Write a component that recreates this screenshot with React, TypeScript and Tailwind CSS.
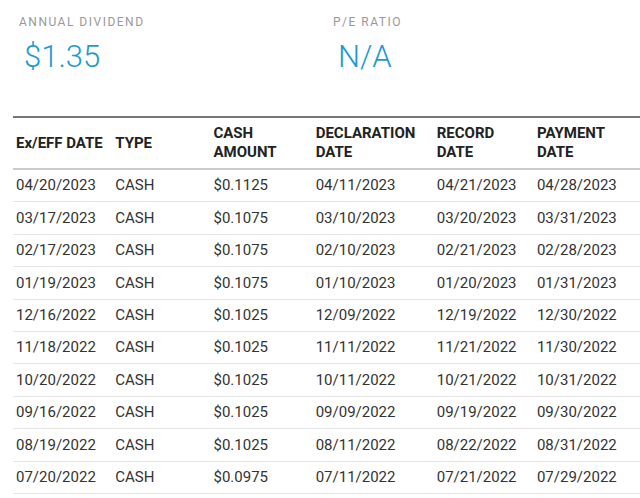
const rows = [
  ["04/20/2023", "CASH", "$0.1125", "04/11/2023", "04/21/2023", "04/28/2023"],
  ["03/17/2023", "CASH", "$0.1075", "03/10/2023", "03/20/2023", "03/31/2023"],
  ["02/17/2023", "CASH", "$0.1075", "02/10/2023", "02/21/2023", "02/28/2023"],
  ["01/19/2023", "CASH", "$0.1075", "01/10/2023", "01/20/2023", "01/31/2023"],
  ["12/16/2022", "CASH", "$0.1025", "12/09/2022", "12/19/2022", "12/30/2022"],
  ["11/18/2022", "CASH", "$0.1025", "11/11/2022", "11/21/2022", "11/30/2022"],
  ["10/20/2022", "CASH", "$0.1025", "10/11/2022", "10/21/2022", "10/31/2022"],
  ["09/16/2022", "CASH", "$0.1025", "09/09/2022", "09/19/2022", "09/30/2022"],
  ["08/19/2022", "CASH", "$0.1025", "08/11/2022", "08/22/2022", "08/31/2022"],
  ["07/20/2022", "CASH", "$0.0975", "07/11/2022", "07/21/2022", "07/29/2022"],
];

const headers = ["Ex/EFF DATE", "TYPE", "CASH AMOUNT", "DECLARATION DATE", "RECORD DATE", "PAYMENT DATE"];
const widths = ["w-[100px]", "w-[99px]", "w-[103px]", "w-[122px]", "w-[101px]", "w-[120px]"];

export default function App() {
  return (
    <div className="w-[640px] h-[498px] overflow-hidden bg-white font-[Roboto,sans-serif]">
      <div className="flex pl-[19px] pt-[13px]">
        <div className="w-[314px]">
          <div className="text-[12px] tracking-[1.5px] text-[#999]">ANNUAL DIVIDEND</div>
          <div className="text-[31px] font-light text-[#1a9bd0] mt-[6px] pl-[5px] leading-[40px]">$1.35</div>
        </div>
        <div>
          <div className="text-[12px] tracking-[1.5px] text-[#999]">P/E RATIO</div>
          <div className="text-[31px] font-light text-[#1a9bd0] mt-[6px] pl-[5px] leading-[40px]">N/A</div>
        </div>
      </div>
      <div className="ml-[13px] mt-[39px] w-[640px] border-t-2 border-[#777]">
        <div className="flex items-center h-[52px] border-b-2 border-[#ccc] text-[15px] font-bold text-[#222] leading-[19px]">
          {headers.map((h, i) => (
            <div key={h} className={`${widths[i]} pl-[3px] ${i === 0 ? "whitespace-nowrap" : ""}`}>
              {h === "Ex/EFF DATE" || h === "TYPE" ? h : (<>{h.split(" ")[0]}<br />{h.split(" ")[1]}</>)}
            </div>
          ))}
        </div>
        {rows.map((r) => (
          <div key={r[0]} className="flex items-center h-[32.4px] border-b border-[#e5e5e5] text-[15px] text-[#333]">
            {r.map((c, i) => (
              <div key={i} className={`${widths[i]} pl-[3px]`}>{c}</div>
            ))}
          </div>
        ))}
      </div>
    </div>
  );
}
